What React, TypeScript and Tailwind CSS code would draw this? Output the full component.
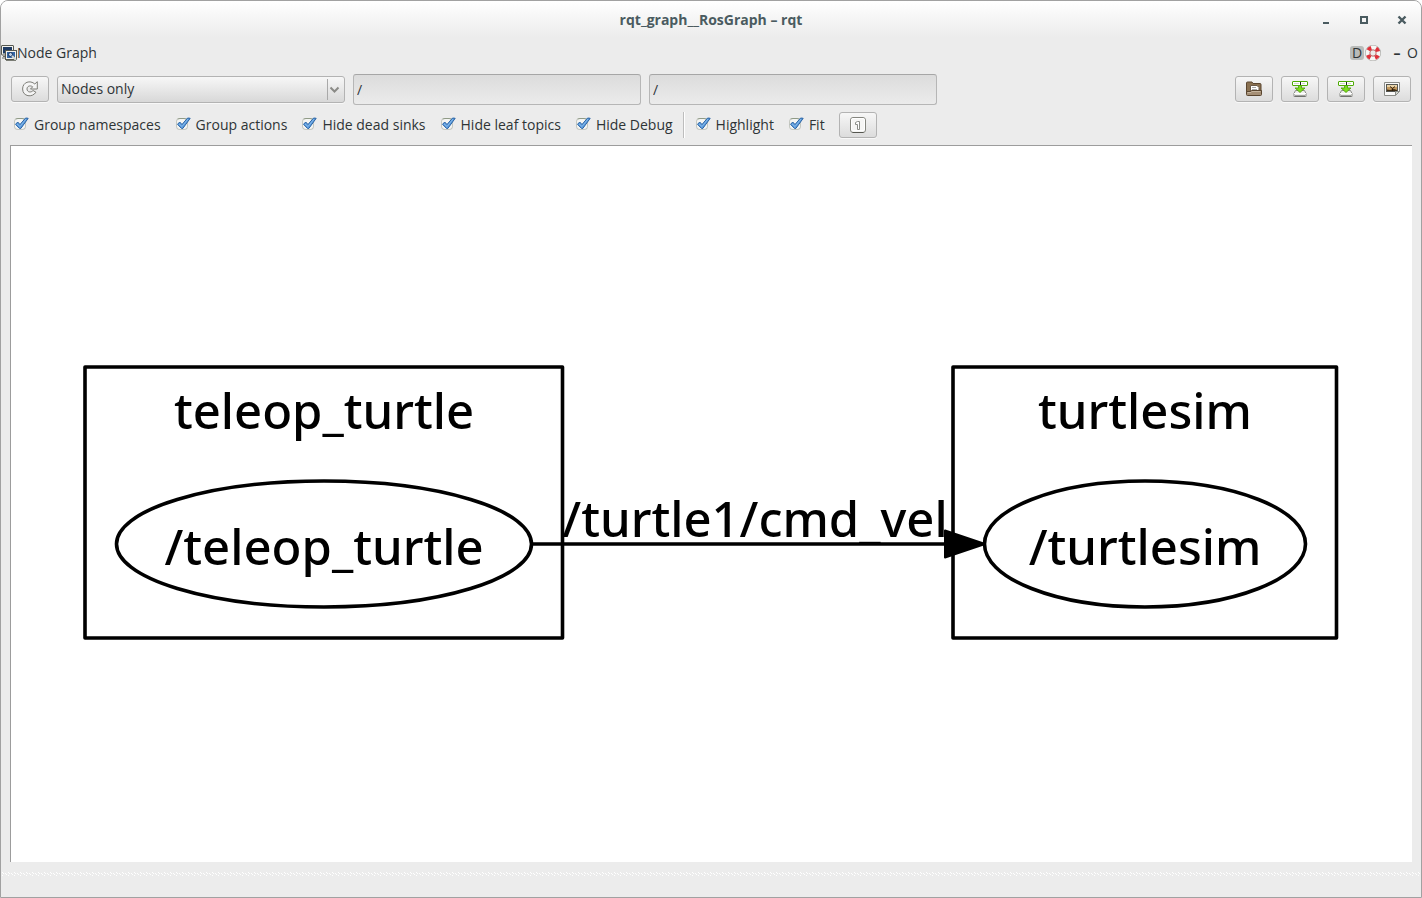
import { useState } from 'react';
import type { ReactNode } from 'react';

function WindowsIcon() {
  return (
    <svg width="16" height="16" viewBox="0 0 16 16" aria-hidden="true">
      <rect x="0.5" y="0.5" width="12" height="9.5" rx="0.5" fill="#f2f2ee" stroke="#55574f" />
      <rect x="2" y="2" width="9" height="6.5" fill="#1d3a63" />
      <path d="M2 11.5h5M1 13h4" stroke="#6b6d66" />
      <rect x="4.5" y="5.5" width="11" height="9" fill="#f2f2ee" stroke="#55574f" />
      <rect x="6" y="7" width="8" height="6" fill="#3465a4" />
      <circle cx="9.5" cy="9.5" r="2" fill="#bcd0e8" stroke="#17335a" />
      <path d="M11 11l4 4" stroke="#d3d7cf" strokeWidth="2" />
      <path d="M5 15.5h10" stroke="#7b7d75" />
    </svg>
  );
}

function ReloadIcon() {
  return (
    <svg width="16" height="16" viewBox="0 0 16 16" aria-hidden="true">
      <path
        d="M15.300 0.700V8H8.500l2.200-2.200C8 3.900 5 5.200 5 8c0 3.200 4 4 6 1.500l2.900 1.700C10.500 17 0.600 15.700 0.600 8 0.600 1 8.200-1.200 12.800 3z"
        fill="#f5f5f5"
        stroke="#7d7d77"
        strokeLinejoin="round"
      />
    </svg>
  );
}

function FolderIcon() {
  return (
    <svg width="16" height="16" viewBox="0 0 16 16" aria-hidden="true">
      <path d="M0.5 12.5V2q0-1 1-1h4.500l1 1.500h7q1 0 1 1v9z" fill="#8a7151" stroke="#5a4630" />
      <path d="M4.500 11V4.500h6.500l2 2V11z" fill="#fff" stroke="#6a5a48" />
      <path d="M6 6.500h4M6 8.500h5" stroke="#aaa" />
      <path d="M0.500 10.500h4l1-1h10v4q0 1-1 1h-13q-1 0-1-1z" fill="#a58f76" stroke="#5a4630" />
      <path d="M1.500 11.500h3.500l1-1h8.500" stroke="#c6b59f" fill="none" />
    </svg>
  );
}

function SaveIcon() {
  return (
    <svg width="16" height="16" viewBox="0 0 16 16" aria-hidden="true">
      <path d="M3.500 9.500h9l1.500 3v3H2v-3z" fill="#eeeeec" stroke="#8b8d88" />
      <path d="M2 12.500h12" stroke="#fff" />
      <path d="M3 15h10" stroke="#555753" />
      <path d="M6.500 4v3H3L8 11.500 13 7H9.500V4z" fill="#7be01e" stroke="#4e9a06" strokeWidth="0.800" />
      <rect x="0.500" y="0.500" width="15" height="4" rx="0.500" fill="#fff" stroke="#4eab06" />
      <path d="M2 2.500h5M10 2.500h3" stroke="#d3d7cf" />
      <path d="M8.500 1v3" stroke="#222" />
    </svg>
  );
}

function ImageIcon() {
  return (
    <svg width="16" height="16" viewBox="0 0 16 16" aria-hidden="true">
      <path d="M0.500 1.500h15v9l-4 4h-11z" fill="#fafafa" stroke="#8b8d88" />
      <rect x="2.500" y="3.500" width="11" height="7" fill="#c59a5f" stroke="#555753" />
      <rect x="3" y="4" width="10" height="2" fill="#e8d3a8" />
      <path d="M3 10V8.500l3 0.500 4-1 3 1V10z" fill="#3f2d14" />
      <path d="M8.500 10V7.500M6 5.500l2.500 2 2.500-2" stroke="#2b1d0b" fill="none" />
      <path d="M15.500 10.500l-4 4v-4z" fill="#d3d7cf" stroke="#8b8d88" />
    </svg>
  );
}

function OneIcon() {
  return (
    <svg width="16" height="16" viewBox="0 0 16 16" aria-hidden="true">
      <rect x="0.500" y="0.500" width="15" height="15" rx="2.500" fill="#f6f6f5" stroke="#85867f" />
      <path d="M2.500 15.500h11" stroke="#55564f" />
      <rect x="1.500" y="1.500" width="13" height="12" rx="1.500" fill="none" stroke="#fff" />
      <path d="M5.500 5.500l2-1h2v8h-2v-5h-2z" fill="#fff" stroke="#8b8d88" />
    </svg>
  );
}

function LifeRingIcon() {
  return (
    <svg width="16" height="16" viewBox="0 0 16 16" aria-hidden="true" fill="none">
      <circle cx="8" cy="8" r="5.500" stroke="#a5a5a1" strokeWidth="5" />
      <circle cx="8" cy="8" r="5.400" stroke="#f7f7f5" strokeWidth="4" />
      <circle
        cx="8"
        cy="8"
        r="5.400"
        stroke="#e0303a"
        strokeWidth="4"
        strokeDasharray="3.600 4.882"
        strokeDashoffset="-2.441"
      />
      <circle cx="8" cy="8" r="3.100" stroke="#c4504f" strokeWidth="0.700" />
    </svg>
  );
}

function CheckOption({ label }: { label: string }) {
  const [checked, setChecked] = useState(true);
  return (
    <label className="flex items-center gap-[7px] whitespace-nowrap">
      <span className="relative flex size-3.5">
        <input
          type="checkbox"
          checked={checked}
          onChange={(event) => setChecked(event.target.checked)}
          className="peer mx-px size-3 appearance-none rounded-sm border border-[#c4c7c0] border-t-[#8f9a86] bg-[#f4f5f3]"
        />
        <svg
          viewBox="0 0 16 14"
          aria-hidden="true"
          className="pointer-events-none absolute -top-px left-px hidden h-3.5 w-4 peer-checked:block"
        >
          <path
            d="M1.500 7.300L3.700 5l2.300 2.500L11.600 1l2.600 0.300-7.400 10.200H5.600z"
            fill="#5b9bdc"
            stroke="#2a63a5"
            strokeLinejoin="round"
          />
          <path d="M3 7l3 2.500L12 2" fill="none" stroke="#8fc0ee" strokeWidth="0.800" />
        </svg>
      </span>
      {label}
    </label>
  );
}

function ToolButton({ label, children }: { label: string; children: ReactNode }) {
  return (
    <button
      type="button"
      aria-label={label}
      className="flex h-[26px] w-[38px] shrink-0 items-center justify-center rounded-[3px] border border-[#b3b3b3] bg-linear-to-b from-[#f7f7f7] to-[#dcdcdc] shadow-[0_1px_0_#f8f8f8]"
    >
      {children}
    </button>
  );
}

function FilterInput({ label }: { label: string }) {
  return (
    <input
      type="text"
      aria-label={label}
      defaultValue="/"
      className="h-[31px] w-72 rounded-[3px] border border-[#b6b6b6] border-t-[#a6a6a6] bg-linear-to-b from-[#dcdcdc] to-[#ebebeb] px-[3px] text-[#2e3436]"
    />
  );
}

function GraphView() {
  return (
    <svg
      viewBox="0 0 1401 716"
      role="img"
      aria-label="Node graph"
      className="absolute inset-0 size-full"
    >
      <g fill="none" stroke="#000" strokeWidth="3.600" strokeLinejoin="round">
        <rect x="74" y="221" width="477.500" height="271" />
        <rect x="942" y="221" width="383.500" height="271" />
        <ellipse cx="313" cy="398" rx="207.500" ry="63" />
        <ellipse cx="1134" cy="398" rx="160.500" ry="63" />
        <path d="M520 398H934" />
      </g>
      <path d="M934 384.500L974 398l-40 13.500z" stroke="#000" strokeWidth="2" strokeLinejoin="round" />
      <g
        textAnchor="middle"
        className="font-['Noto_Sans','Open_Sans',sans-serif] text-[49px] font-medium"
      >
        <text x="313" y="283">teleop_turtle</text>
        <text x="313" y="419">/teleop_turtle</text>
        <text x="744" y="391">/turtle1/cmd_vel</text>
        <text x="1134" y="283">turtlesim</text>
        <text x="1134" y="419">/turtlesim</text>
      </g>
    </svg>
  );
}

export default function App() {
  return (
    <div className="h-screen bg-white">
      <div className="flex h-full flex-col overflow-hidden rounded-t-lg border border-[#a1a1a1] bg-[#ececec] font-['Open_Sans','Noto_Sans',sans-serif] text-sm text-[#2e3436]">
        <header className="grid h-9 shrink-0 grid-cols-[1fr_auto_1fr] items-center bg-linear-to-b from-white to-[#ececec] pt-0.5 text-[#4a5b60]">
          <h1 className="col-start-2 text-sm font-bold">rqt_graph__RosGraph – rqt</h1>
          <div className="flex justify-end gap-[22px] pr-[11px]">
            <button type="button" aria-label="Minimize" className="size-4">
              <svg viewBox="0 0 16 16" aria-hidden="true">
                <path d="M5 11h6" stroke="#4a5b60" strokeWidth="2" />
              </svg>
            </button>
            <button type="button" aria-label="Maximize" className="size-4">
              <svg viewBox="0 0 16 16" aria-hidden="true">
                <rect x="5" y="5" width="6" height="6" fill="none" stroke="#4a5b60" strokeWidth="2" />
              </svg>
            </button>
            <button type="button" aria-label="Close" className="size-4">
              <svg viewBox="0 0 16 16" aria-hidden="true">
                <path d="M4.500 4.500l7 7M11.500 4.500l-7 7" stroke="#4a5b60" strokeWidth="2.400" />
              </svg>
            </button>
          </div>
        </header>

        <div className="flex h-8 shrink-0 items-center">
          <WindowsIcon />
          <h2>Node Graph</h2>
          <div className="ml-auto flex items-center pr-[3px]">
            <button
              type="button"
              aria-label="Dock"
              className="flex h-3.5 w-3.5 items-center justify-center rounded-[3px] bg-[#b9bbb9]"
            >
              D
            </button>
            <button type="button" aria-label="Help" className="ml-px">
              <LifeRingIcon />
            </button>
            <button type="button" aria-label="Minimize panel" className="ml-3 w-2 font-bold">
              –
            </button>
            <button type="button" aria-label="Undock panel" className="ml-1.5">
              O
            </button>
          </div>
        </div>

        <div className="flex h-10 shrink-0 items-center gap-2 px-2.5">
          <ToolButton label="Refresh">
            <ReloadIcon />
          </ToolButton>
          <div className="relative w-72">
            <select
              aria-label="Graph type"
              className="block h-[27px] w-full appearance-none rounded-[3px] border border-[#b3b3b3] bg-linear-to-b from-[#f7f7f7] to-[#d8d8d8] px-[3px] shadow-[0_1px_0_#f8f8f8]"
            >
              <option>Nodes only</option>
              <option>Nodes/Topics (active)</option>
              <option>Nodes/Topics (all)</option>
            </select>
            <svg
              viewBox="0 0 20 27"
              aria-hidden="true"
              fill="none"
              className="pointer-events-none absolute top-0 right-0 h-[27px] w-5"
            >
              <path d="M2.500 3v21" stroke="#a9a9a9" />
              <path d="M5.500 11.500l4 4 4-4" stroke="#8a8a86" strokeWidth="2" />
            </svg>
          </div>
          <FilterInput label="Namespace filter" />
          <FilterInput label="Topic filter" />
          <div className="ml-auto flex gap-2">
            <ToolButton label="Load DOT graph">
              <FolderIcon />
            </ToolButton>
            <ToolButton label="Save as DOT graph">
              <SaveIcon />
            </ToolButton>
            <ToolButton label="Save as SVG">
              <SaveIcon />
            </ToolButton>
            <ToolButton label="Save as image">
              <ImageIcon />
            </ToolButton>
          </div>
        </div>

        <div className="flex h-8 shrink-0 items-center gap-3.5 px-3">
          <CheckOption label="Group namespaces" />
          <CheckOption label="Group actions" />
          <CheckOption label="Hide dead sinks" />
          <CheckOption label="Hide leaf topics" />
          <CheckOption label="Hide Debug" />
          <div className="-mx-1 h-[26px] border-l border-[#bdbdbd] border-r border-r-white" />
          <CheckOption label="Highlight" />
          <CheckOption label="Fit" />
          <ToolButton label="Fit in view">
            <OneIcon />
          </ToolButton>
        </div>

        <main className="relative mx-[9px] mt-1 flex-1 border-t border-l border-[#9c9c9c] bg-white">
          <GraphView />
        </main>

        <footer className="flex h-[35px] shrink-0 items-start pt-2.5">
          <svg width="100%" height="4" aria-hidden="true">
            <defs>
              <pattern id="grip" width="6" height="4" patternUnits="userSpaceOnUse">
                <path d="M1 0h1v1h-1zM2 1h1v1h-1zM4 1h1v1h-1zM5 2h1v1h-1zM1 3h1v1h-1z" fill="#fff" />
              </pattern>
            </defs>
            <rect width="100%" height="4" fill="url(#grip)" />
          </svg>
        </footer>
      </div>
    </div>
  );
}
